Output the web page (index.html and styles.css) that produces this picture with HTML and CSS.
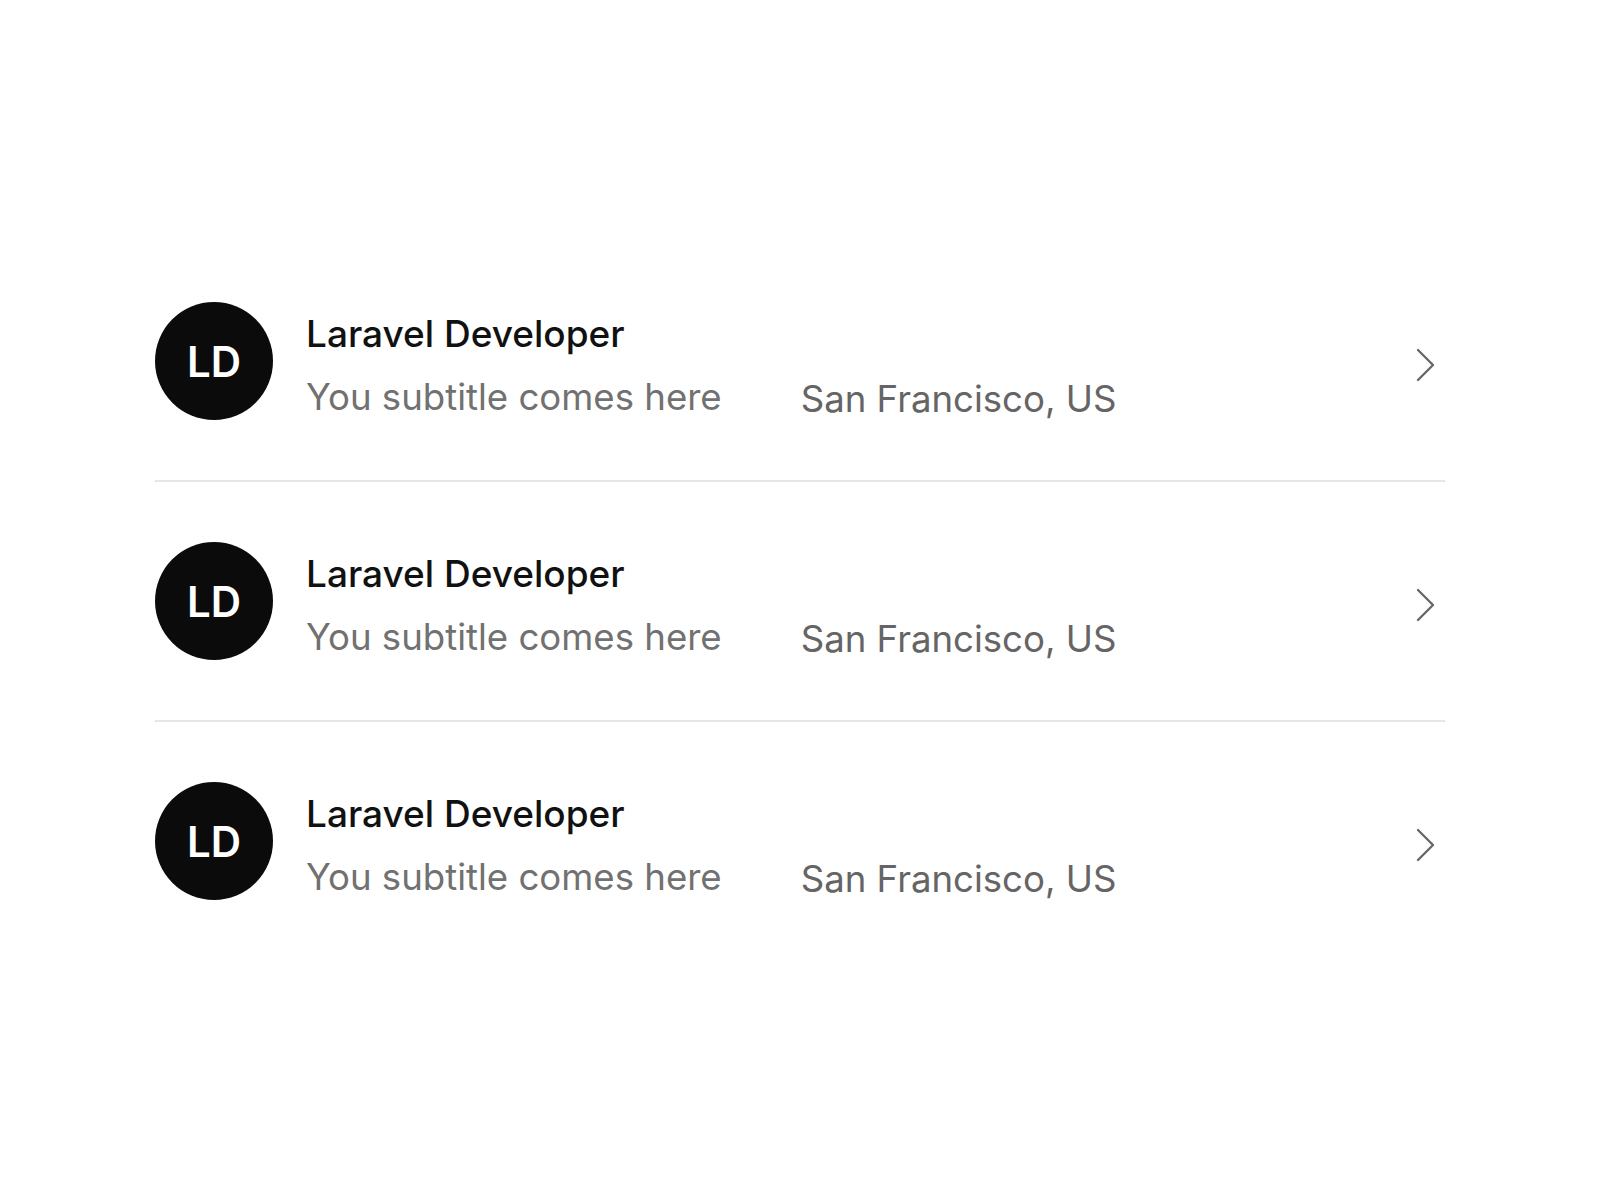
FILE: index.html
```html
<!DOCTYPE html>
<html lang="en">
<head>
  <meta charset="UTF-8">
  <meta name="viewport" content="width=device-width, initial-scale=1.0">
  <title>Job List</title>
  <link rel="stylesheet" href="styles.css">
</head>
<body>
  <ul class="job-list">
    <li class="job-item">
      <div class="avatar">LD</div>
      <div class="job-info">
        <h3 class="job-title">Laravel Developer</h3>
        <div class="job-meta">
          <span class="job-subtitle">You subtitle comes here</span>
          <span class="job-location">San Francisco, US</span>
        </div>
      </div>
      <svg class="chevron" width="22" height="34" viewBox="0 0 22 34" fill="none">
        <path d="M3 2 L18 17 L3 32" stroke="#666" stroke-width="2.3" stroke-linecap="round" stroke-linejoin="round"/>
      </svg>
    </li>
    <li class="job-item">
      <div class="avatar">LD</div>
      <div class="job-info">
        <h3 class="job-title">Laravel Developer</h3>
        <div class="job-meta">
          <span class="job-subtitle">You subtitle comes here</span>
          <span class="job-location">San Francisco, US</span>
        </div>
      </div>
      <svg class="chevron" width="22" height="34" viewBox="0 0 22 34" fill="none">
        <path d="M3 2 L18 17 L3 32" stroke="#666" stroke-width="2.3" stroke-linecap="round" stroke-linejoin="round"/>
      </svg>
    </li>
    <li class="job-item">
      <div class="avatar">LD</div>
      <div class="job-info">
        <h3 class="job-title">Laravel Developer</h3>
        <div class="job-meta">
          <span class="job-subtitle">You subtitle comes here</span>
          <span class="job-location">San Francisco, US</span>
        </div>
      </div>
      <svg class="chevron" width="22" height="34" viewBox="0 0 22 34" fill="none">
        <path d="M3 2 L18 17 L3 32" stroke="#666" stroke-width="2.3" stroke-linecap="round" stroke-linejoin="round"/>
      </svg>
    </li>
  </ul>
</body>
</html>
```

FILE: styles.css
```css
body {
  font-family: Inter, "Noto Sans", sans-serif;
  margin: 0;
  padding: 0;
  background: #fff;
}
.job-list {
  list-style: none;
  width: 1290px;
  margin: 242px auto 0;
  padding: 0;
}
.job-item {
  display: flex;
  align-items: center;
  height: 240px;
  box-sizing: border-box;
  padding: 0 8px 0 0;
  border-bottom: 2px solid #e6e6e6;
}
.job-item:last-child {
  border-bottom-color: transparent;
}
.avatar {
  width: 118px;
  height: 118px;
  flex-shrink: 0;
  border-radius: 50%;
  background: #0b0b0b;
  color: #fff;
  font-size: 42px;
  font-weight: 600;
  display: flex;
  align-items: center;
  justify-content: center;
}
.job-info {
  margin-left: 33px;
  padding-top: 8px;
}
.job-title {
  margin: 0;
  font-size: 37px;
  font-weight: 500;
  line-height: 46px;
  color: #111;
}
.job-meta {
  display: flex;
  align-items: baseline;
  gap: 79px;
  margin-top: 18px;
  font-size: 36.6px;
  line-height: 45px;
}
.job-subtitle {
  color: #717171;
}
.job-location {
  color: #656565;
  position: relative;
  top: 2px;
}
.chevron {
  margin-left: auto;
  margin-top: 8px;
}
```
